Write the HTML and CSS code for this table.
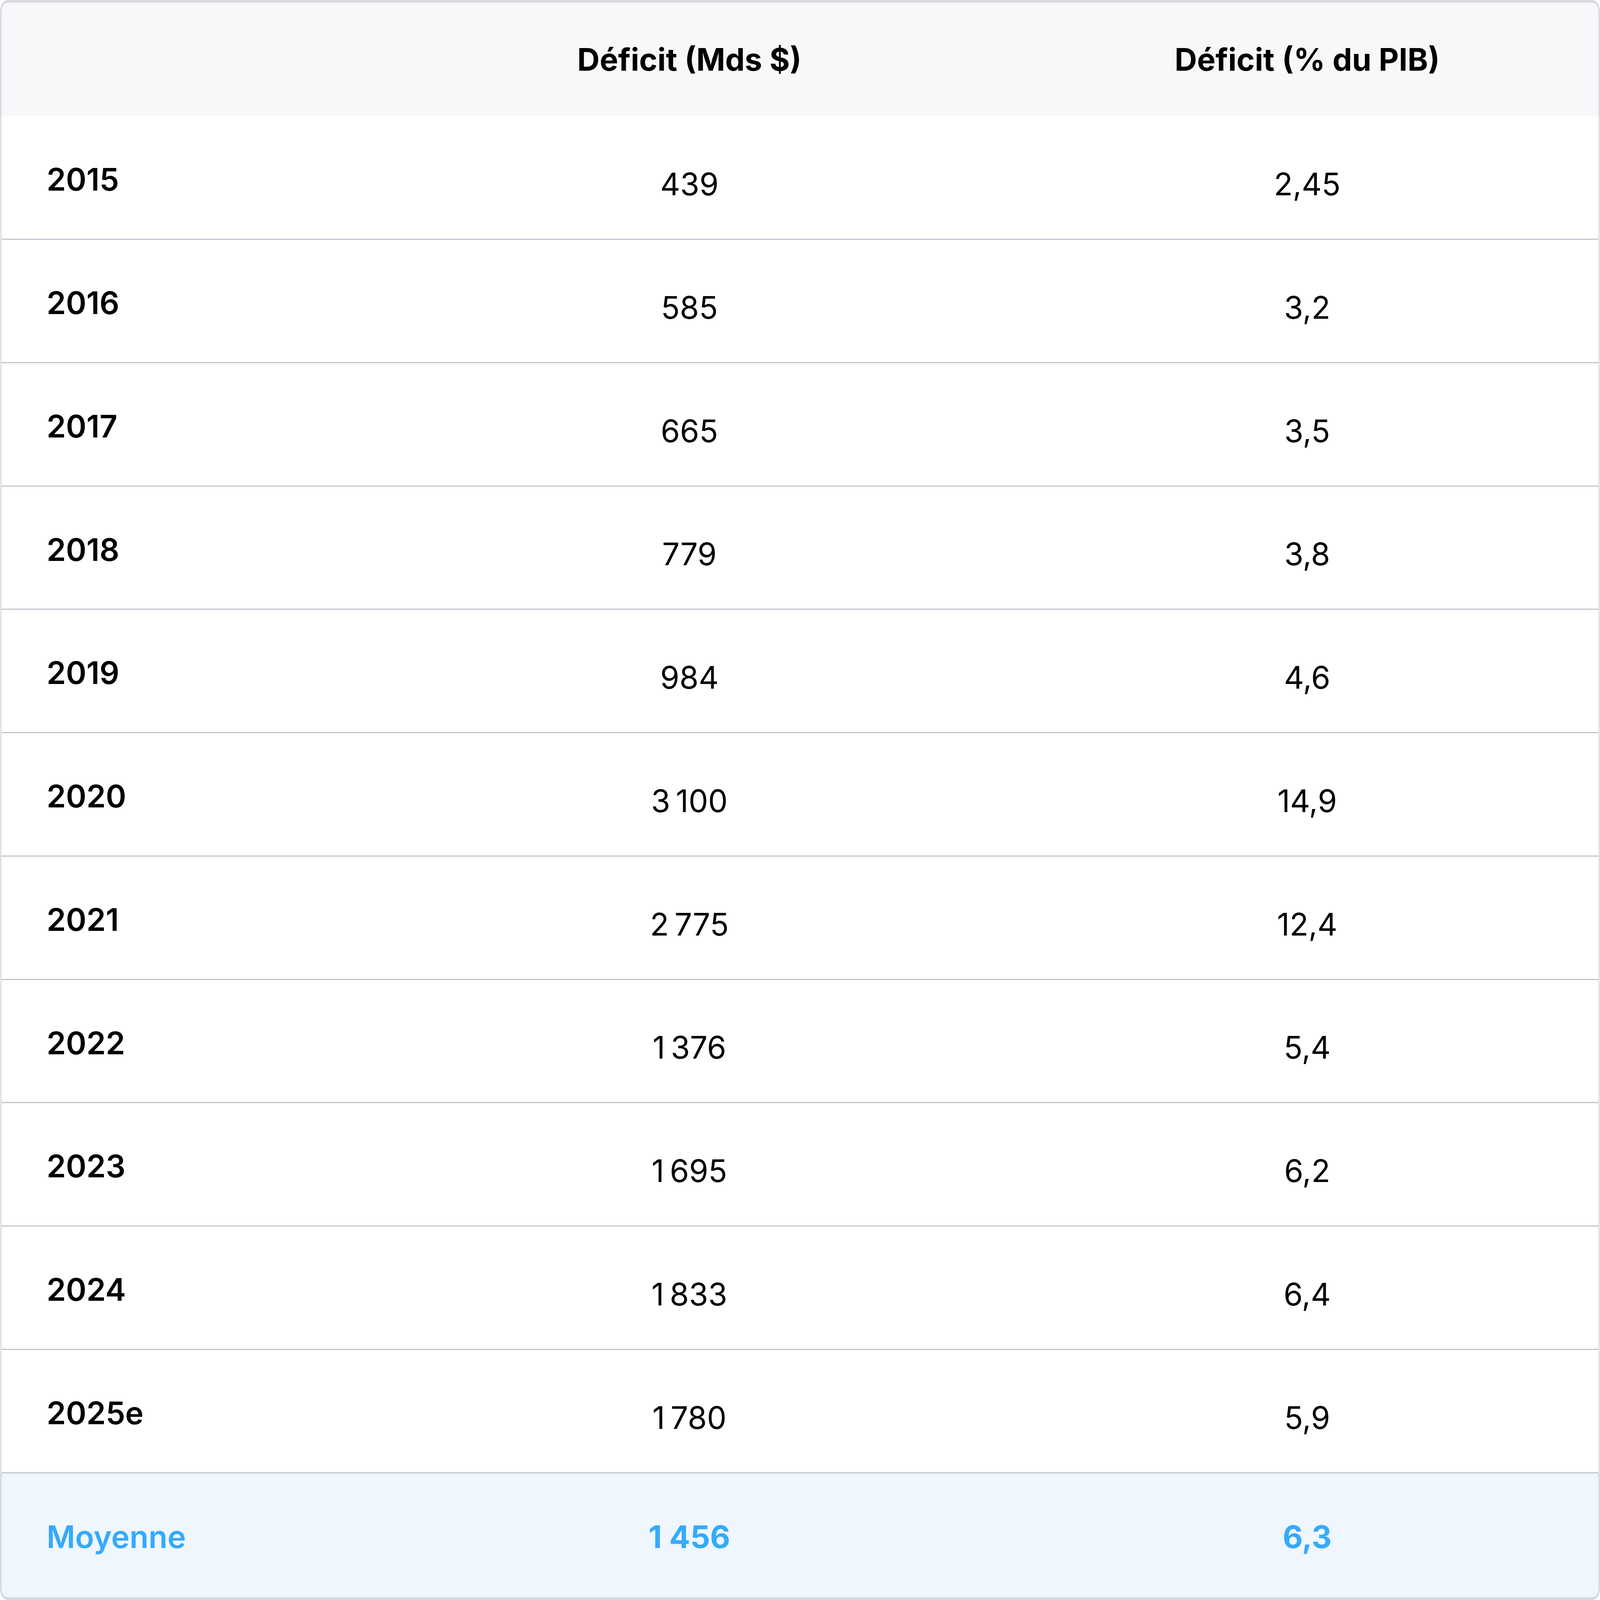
FILE: index.html
```html
<!DOCTYPE html>
<html lang="fr">
<head>
<meta charset="utf-8">
<title>Déficit budgétaire</title>
<link rel="stylesheet" href="styles.css">
</head>
<body>
<div class="card" role="table" aria-label="Déficit budgétaire">
  <div class="row head" role="row">
    <div class="cell year" role="columnheader"></div>
    <div class="cell" role="columnheader">Déficit (Mds $)</div>
    <div class="cell" role="columnheader">Déficit (% du PIB)</div>
  </div>
  <div class="row data" role="row"><div class="cell year" role="rowheader">2015</div><div class="cell num" role="cell">439</div><div class="cell num" role="cell">2,45</div></div>
  <div class="row data" role="row"><div class="cell year" role="rowheader">2016</div><div class="cell num" role="cell">585</div><div class="cell num" role="cell">3,2</div></div>
  <div class="row data" role="row"><div class="cell year" role="rowheader">2017</div><div class="cell num" role="cell">665</div><div class="cell num" role="cell">3,5</div></div>
  <div class="row data" role="row"><div class="cell year" role="rowheader">2018</div><div class="cell num" role="cell">779</div><div class="cell num" role="cell">3,8</div></div>
  <div class="row data" role="row"><div class="cell year" role="rowheader">2019</div><div class="cell num" role="cell">984</div><div class="cell num" role="cell">4,6</div></div>
  <div class="row data" role="row"><div class="cell year" role="rowheader">2020</div><div class="cell num" role="cell">3&#8239;100</div><div class="cell num" role="cell">14,9</div></div>
  <div class="row data" role="row"><div class="cell year" role="rowheader">2021</div><div class="cell num" role="cell">2&#8239;775</div><div class="cell num" role="cell">12,4</div></div>
  <div class="row data" role="row"><div class="cell year" role="rowheader">2022</div><div class="cell num" role="cell">1&#8239;376</div><div class="cell num" role="cell">5,4</div></div>
  <div class="row data" role="row"><div class="cell year" role="rowheader">2023</div><div class="cell num" role="cell">1&#8239;695</div><div class="cell num" role="cell">6,2</div></div>
  <div class="row data" role="row"><div class="cell year" role="rowheader">2024</div><div class="cell num" role="cell">1&#8239;833</div><div class="cell num" role="cell">6,4</div></div>
  <div class="row data" role="row"><div class="cell year" role="rowheader">2025e</div><div class="cell num" role="cell">1&#8239;780</div><div class="cell num" role="cell">5,9</div></div>
  <div class="row foot" role="row">
    <div class="cell year" role="rowheader">Moyenne</div>
    <div class="cell" role="cell">1&nbsp;456</div>
    <div class="cell" role="cell">6,3</div>
  </div>
</div>
</body>
</html>
```
FILE: styles.css
```css
/* Reference frame: 6754 x 4514. Horizontal sizes in vw, vertical sizes in vh. */
html, body {
  margin: 0;
  padding: 0;
  background: #ffffff;
}

body {
  font-family: "Inter", "Noto Sans", "Liberation Sans", sans-serif;
  color: #000000;
}

.card {
  box-sizing: border-box;
  width: 100vw;
  height: 100vh;
  display: flex;
  flex-direction: column;
  border-style: solid;
  border-color: rgba(15, 23, 42, 0.13);
  border-width: 0.1772vh 0.1184vw;
  border-radius: 0.5vw / 0.75vh;
  overflow: hidden;
  font-size: min(1.94vw, 2.902vh);
  line-height: 1.2;
  background-origin: border-box;
  background-image: linear-gradient(to bottom,
    #f7f8fa 0, #f7f8fa 7.288vh,
    #ffffff 7.288vh, #ffffff calc(100% - 7.909vh),
    #eff6fd calc(100% - 7.909vh), #eff6fd 100%);
}

.row {
  box-sizing: border-box;
  display: grid;
  grid-template-columns: 22.58vw 40.82vw 1fr;
  flex: none;
}

.cell {
  display: flex;
  align-items: center;
  justify-content: center;
  white-space: nowrap;
}

.cell.year {
  justify-content: flex-start;
  padding-left: 2.813vw;
  font-weight: 600;
}

.head {
  height: 7.111vh;
  background: #f7f8fa;
  font-weight: 700;
}

.data {
  height: 7.709vh;
  border-bottom: 0.0886vh solid #c0c5ce;
  background: #ffffff;
}

.data .year {
  padding-top: 0.27vh;
}

.data .num {
  font-weight: 400;
  padding-top: 0.84vh;
}

.foot {
  flex: 1 1 auto;
  background: #eff6fd;
  color: #35aafd;
  font-weight: 700;
}

.foot .cell {
  padding-top: 0.2vh;
}
```
